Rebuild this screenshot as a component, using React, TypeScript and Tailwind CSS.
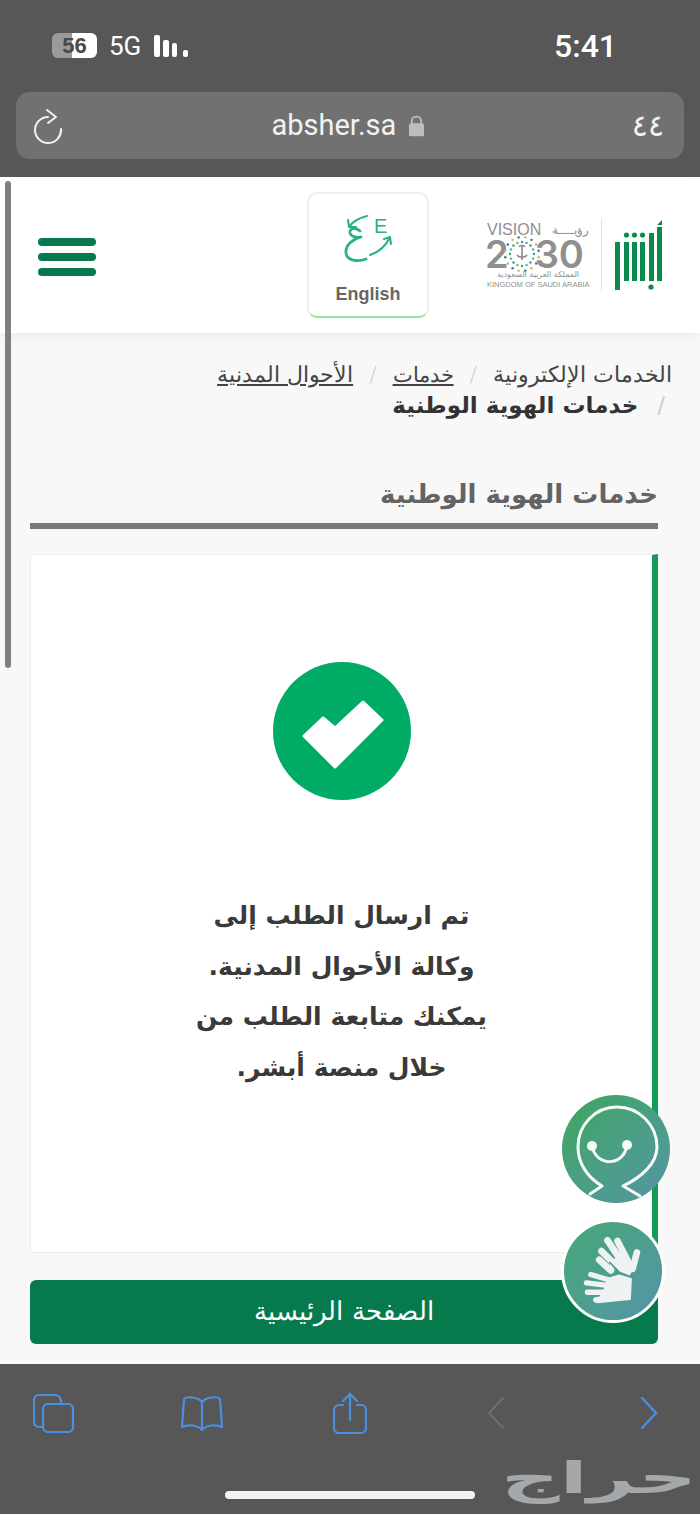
const arabic = { fontFamily: '"DejaVu Sans", sans-serif' };

function ReloadIcon() {
  return (
    <svg width="30" height="36" viewBox="0 0 30 36" fill="none" stroke="#f2f2f2" strokeWidth="2" strokeLinecap="round" strokeLinejoin="round">
      <path d="M14 9A13 13 0 1 0 27 21" />
      <path d="M13 2l9 7-8 6" />
    </svg>
  );
}

function AbsherLogo() {
  return (
    <svg width="50" height="72" viewBox="0 0 50 72" fill="#0b8a4d">
      <rect x="1" y="23" width="5" height="48" />
      <rect x="10" y="23" width="5" height="39" />
      <rect x="18" y="23" width="5" height="39" />
      <rect x="26" y="23" width="5" height="39" />
      <rect x="35" y="14" width="5" height="48" />
      <rect x="43" y="8" width="5" height="54" />
      <path d="M43 6l5-5v5z" />
      <circle cx="12.5" cy="16" r="2.6" />
      <circle cx="20.5" cy="16" r="2.6" />
      <circle cx="28.5" cy="16" r="2.6" />
      <circle cx="37" cy="68" r="2.6" />
    </svg>
  );
}

function VisionStar() {
  const dots = Array.from({ length: 32 }, (_, i) => {
    const a = (i / 32) * Math.PI * 2;
    const r = i % 2 ? 17 : 12;
    return { x: 18 + Math.cos(a) * r, y: 18 + Math.sin(a) * r, c: ["#3f9e6f", "#c9b64a", "#4aa8c0", "#2f6f8f"][i % 4] };
  });
  return (
    <svg width="36" height="36" viewBox="0 0 36 36">
      {dots.map((d, i) => (
        <circle key={i} cx={d.x} cy={d.y} r="1.2" fill={d.c} />
      ))}
      <path d="M18 10v14M13 19c2 3 8 3 10 0M15 11c1-2 5-2 6 0" stroke="#8a8a8a" strokeWidth="1.6" fill="none" />
    </svg>
  );
}

function LangIcon() {
  return (
    <svg width="56" height="56" viewBox="0 0 56 56" fill="none" stroke="#2cb27f" strokeWidth="2" strokeLinecap="round" strokeLinejoin="round">
      <path d="M27 7C19 9 13 12 9 18M8 11l1 7 7 0" />
      <path d="M20 22C16 18 9 19 10 24C11 28 17 29 21 28C13 30 5 36 6 44C7 52 18 53 26 50" strokeWidth="2.8" />
      <path d="M30 46C39 43 46 37 50 28M44 30l6-2 1 7" />
      <text x="34" y="24" fontSize="20" fontFamily="Liberation Sans" fill="#2cb27f" stroke="none">E</text>
    </svg>
  );
}

function SmileBot() {
  return (
    <div className="absolute left-[562px] top-[1095px] w-[108px] h-[108px] rounded-full bg-gradient-to-br from-[#3fa65c] to-[#5595a5] overflow-hidden">
      <svg width="108" height="108" viewBox="0 0 108 108" fill="none" stroke="#f6fbf7" strokeWidth="3" strokeLinecap="round" strokeLinejoin="round">
        <path d="M28 99L40 91C25 82 16 68 16 52C16 30 33 12 55 12C77 12 95 30 95 52C95 68 80 82 61 91L78 101" />
        <path d="M30 51C34 72 62 72 65 50" />
        <circle cx="30" cy="51" r="5" fill="#f6fbf7" stroke="none" />
        <circle cx="65" cy="50" r="5" fill="#f6fbf7" stroke="none" />
      </svg>
    </div>
  );
}

function SignHands() {
  return (
    <div className="absolute left-[561px] top-[1219px] w-[104px] h-[104px] rounded-full border-[3px] border-white bg-gradient-to-br from-[#45a873] to-[#5593a8] flex items-center justify-center">
      <svg width="98" height="98" viewBox="75 425 293 293" fill="#eef2f2" stroke="#eef2f2" strokeWidth="20" strokeLinecap="round" strokeLinejoin="round">
        {/* upper hand */}
        <path d="M205 480L245 540M235 482L265 540M187 512L230 555M180 538L215 570M293 516L280 565" fill="none" />
        <path d="M230 535L278 545L280 565L268 585L240 570L215 555z" strokeWidth="6" />
        {/* lower hand */}
        <path d="M155 582L215 600M142 607L210 615M145 635L210 635M170 658L215 650" fill="none" strokeWidth="16" />
        <path d="M205 595L240 585L275 595L272 655L175 665L200 620z" strokeWidth="6" />
        <path d="M212 546L240 575L278 590" fill="none" stroke="#4b9b88" strokeWidth="5" />
      </svg>
    </div>
  );
}

export default function App() {
  return (
    <div className="relative flex flex-col w-[700px] h-[1514px] overflow-hidden bg-[#f8f8f8]" style={{ fontFamily: '"Liberation Sans", sans-serif' }}>
      {/* safari top */}
      <div className="bg-[#575757] h-[177px] shrink-0 flex flex-col">
        <div className="h-[92px] flex items-center justify-between pb-[1px] pl-[52px] pr-[83px] text-white">
          <div className="flex items-center">
            <span className="w-[45px] h-[25px] rounded-[6px] flex items-center justify-center text-[22px] font-semibold text-[#4a4a4a] bg-gradient-to-r from-[#9a9a9a] from-45% to-white to-45%">56</span>
            <span className="ml-[12px] text-[26px] leading-[34px]" style={{ fontFamily: "Roboto" }}>5G</span>
            <div className="flex items-end gap-[3px] h-[22px] ml-[13px]">
              <div className="w-[6px] h-[22px] rounded-[2px] bg-white" />
              <div className="w-[6px] h-[17px] rounded-[2px] bg-white" />
              <div className="w-[5px] h-[14px] rounded-[2px] bg-white" />
              <div className="w-[5px] h-[7px] ml-[3px] rounded-[2px] bg-white" />
            </div>
          </div>
          <span className="text-[32px] leading-[34px] font-medium" style={{ fontFamily: "Roboto" }}>5:41</span>
        </div>
        <div className="mx-[16px] h-[67px] rounded-[14px] bg-[#717171] flex items-center justify-between pl-[18px] pr-[20px]">
          <ReloadIcon />
          <div className="flex items-center gap-[13px] text-[#f2f2f2]">
            <span className="text-[29px]" style={{ fontFamily: "Roboto" }}>absher.sa</span>
            <svg width="15" height="22" viewBox="0 0 16 22" fill="#bdbdbd">
              <rect x="0" y="8" width="16" height="14" rx="2" />
              <path d="M3 9V6a5 5 0 0 1 10 0v3" fill="none" stroke="#bdbdbd" strokeWidth="2" />
            </svg>
          </div>
          <span className="text-[30px] text-[#f2f2f2]" style={arabic}>٤٤</span>
        </div>
      </div>

      {/* site header */}
      <header className="h-[156px] shrink-0 bg-white flex items-center pl-[38px] pr-[36px] shadow-[0_4px_12px_rgba(0,0,0,0.05)]">
        <div className="flex flex-col gap-[7px] w-[58px] mt-[4px]">
          <div className="h-[8px] rounded-full bg-[#067a4d]" />
          <div className="h-[8px] rounded-full bg-[#067a4d]" />
          <div className="h-[8px] rounded-full bg-[#067a4d]" />
        </div>
        <div className="ml-[211px] w-[122px] h-[126px] mt-[-1px] rounded-[10px] border-2 border-[#eeeeee] border-b-[#9ce29c] bg-white flex flex-col items-center pt-[15px]">
          <LangIcon />
          <span className="mt-[16px] text-[18px] font-bold text-[#666666]">English</span>
        </div>
        <div className="ml-auto flex items-center">
          <div className="w-[102px] flex flex-col text-[#8f8f8f]">
            <div className="flex justify-between items-center text-[16px] leading-[16px] font-light">
              <span>VISION</span>
              <span className="text-[12px] leading-[16px]" style={arabic}>رؤيــــة</span>
            </div>
            <div className="flex items-center h-[32px] text-[38px] leading-[32px] font-semibold -ml-[2px]" style={{ fontFamily: "Inter" }}>
              <span>2</span>
              <span className="-mx-[5px]"><VisionStar /></span>
              <span>30</span>
            </div>
            <span className="text-[8px] leading-[10px] text-center" style={arabic}>المملكة العربية السعودية</span>
            <span className="text-[7.5px] leading-[9px] whitespace-nowrap">KINGDOM OF SAUDI ARABIA</span>
          </div>
          <div className="w-px h-[72px] bg-[#dddddd] mx-[12px]" />
          <AbsherLogo />
        </div>
      </header>

      {/* content */}
      <main className="flex-1 flex flex-col pl-[30px] pr-[42px]" dir="rtl" style={arabic}>
        <div className="mr-[-14px] mt-[27px] text-[22px] leading-[30px] text-[#444444] font-light">
          <div className="flex gap-[16px]">
            <span>الخدمات الإلكترونية</span>
            <span className="text-[#cccccc]">/</span>
            <span className="underline text-[20.5px]">خدمات</span>
            <span className="text-[#cccccc]">/</span>
            <span className="underline">الأحوال المدنية</span>
          </div>
          <div className="flex gap-[19px] mr-[7px] text-[23px] font-bold text-[#333333]">
            <span className="text-[#cccccc] font-normal">/</span>
            <span>خدمات الهوية الوطنية</span>
          </div>
        </div>
        <h1 className="mt-[56px] text-[26px] leading-[36px] font-bold text-[#636363]">خدمات الهوية الوطنية</h1>
        <div className="h-[6px] bg-[#7a7a7a] mt-[11px]" />
        <div className="mt-[25px] h-[699px] bg-white border border-[#eeeeee] border-r-[6px] border-r-[#0f9d58] flex flex-col items-center">
          <div className="mt-[107px] w-[138px] h-[138px] rounded-full bg-[#00ab66]">
            <svg width="138" height="138" viewBox="0 0 138 138" fill="#ffffff" stroke="#ffffff" strokeWidth="3" strokeLinejoin="round">
              <path d="M31 74L50 56L62 66L90 40L109 58L62 105z" />
            </svg>
          </div>
          <p className="mt-[91px] text-[25px] leading-[50.5px] font-bold text-[#3a3a3a] text-center">
            تم ارسال الطلب إلى
            <br />
            وكالة الأحوال المدنية.
            <br />
            يمكنك متابعة الطلب من
            <br />
            خلال منصة أبشر.
          </p>
        </div>
        <div className="mt-[27px] h-[64px] pb-[2px] rounded-[6px] bg-[#067a4d] flex items-center justify-center text-white text-[26px] font-light">الصفحة الرئيسية</div>
      </main>

      {/* safari bottom */}
      <footer className="h-[150px] shrink-0 bg-[#575757]">
        <div className="flex items-center pl-[33px] pt-[28px] h-[70px]">
          <svg width="41" height="39" viewBox="0 0 41 39" fill="none" stroke="#4a90e2" strokeWidth="2.2">
            <rect x="10" y="10" width="30" height="28" rx="5" />
            <path d="M10 33H6a5 5 0 0 1-5-5V6a5 5 0 0 1 5-5h16a6 6 0 0 1 6 6v3" />
          </svg>
          <svg width="42" height="35" viewBox="0 0 42 35" fill="none" stroke="#4a90e2" strokeWidth="2.2" strokeLinejoin="round" className="ml-[107px]">
            <path d="M21 6C17 1 6 0 3 3L1 31c6-3 16-2 20 3 4-5 14-6 20-3L39 3c-3-3-14-2-18 3zM21 6v28" />
          </svg>
          <svg width="34" height="42" viewBox="0 0 34 42" fill="none" stroke="#4a90e2" strokeWidth="2.2" strokeLinecap="round" strokeLinejoin="round" className="ml-[110px]">
            <path d="M10 13H6a5 5 0 0 0-5 5v18a5 5 0 0 0 5 5h22a5 5 0 0 0 5-5V18a5 5 0 0 0-5-5h-4" />
            <path d="M17 28V2M10 9l7-7 7 7" />
          </svg>
          <svg width="18" height="32" viewBox="0 0 18 32" fill="none" stroke="#6e6e6e" strokeWidth="2" strokeLinecap="round" className="ml-[120px]">
            <path d="M16 1L2 16l14 15" />
          </svg>
          <svg width="18" height="32" viewBox="0 0 18 32" fill="none" stroke="#4a90e2" strokeWidth="2.4" strokeLinecap="round" className="ml-[135px]">
            <path d="M2 1l14 15L2 31" />
          </svg>
        </div>
        <div className="w-[250px] h-[8px] ml-[225px] mt-[57px] rounded-full bg-[#f2f2f2]" />
      </footer>

      {/* overlays */}
      <div className="absolute left-[5px] top-[181px] w-[6px] h-[487px] rounded-full bg-[#7f7f7f]" />
      <SmileBot />
      <SignHands />
      <span className="absolute left-[546px] top-[1453px] text-[44px] leading-[50px] font-bold text-[#a5a8aa] scale-x-[1.85]" dir="rtl" style={arabic}>حراج</span>
    </div>
  );
}
